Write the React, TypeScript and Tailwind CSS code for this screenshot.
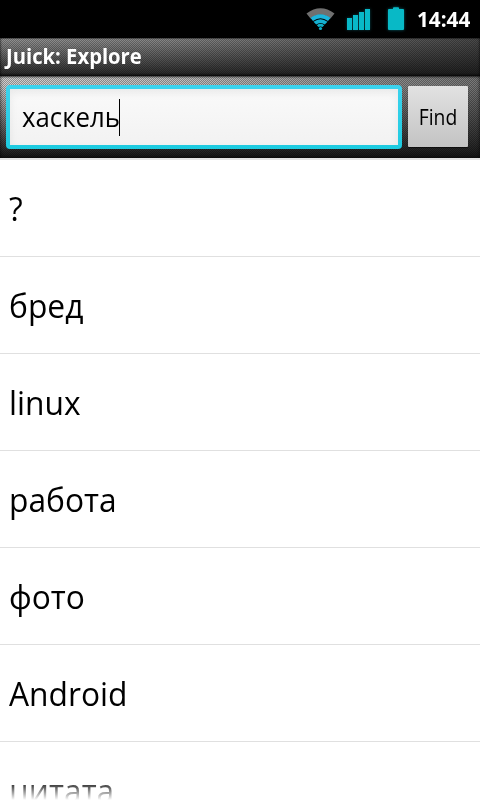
import React from "react";

const tags = ["?", "бред", "linux", "работа", "фото", "Android", "цитата"];

function WifiIcon() {
  return (
    <svg width="30" height="24" viewBox="0 0 30 24">
      <path d="M0.500 5.500 Q14.500 -5 28.500 5.500 L24.500 10.500 Q14.500 3 4.500 10.500 Z" fill="#707070" />
      <path d="M4.500 10 Q14.500 2.500 24.500 10 L22 13 Q14.500 7.500 7 13 Z" fill="#1bb4dc" />
      <path d="M7.500 13.800 Q14.500 8.500 21.500 13.800 L18.800 16.500 Q14.500 13.500 10.200 16.500 Z" fill="#14b1d2" />
      <path d="M10.800 17.200 Q14.500 14.500 18.200 17.200 L16.500 19 Q14.500 18 12.500 19 Z" fill="#0eafc8" />
      <circle cx="14.500" cy="20.500" r="1.600" fill="#0eafc8" />
    </svg>
  );
}

function SignalIcon() {
  return (
    <svg
      width="24"
      height="22"
      viewBox="0 0 24 22"
      fill="#08b9c8"
      className="overflow-visible drop-shadow-[0_0_1.5px_#06444c]"
    >
      <rect x="0" y="9" width="5" height="12" />
      <rect x="6" y="6" width="5" height="15" />
      <rect x="12" y="3" width="5" height="18" />
      <rect x="18" y="0" width="5" height="21" />
    </svg>
  );
}

function BatteryIcon() {
  return (
    <svg
      width="16"
      height="23"
      viewBox="0 0 16 23"
      fill="#08b9c6"
      className="overflow-visible drop-shadow-[0_0_1.5px_#066570]"
    >
      <path d="M1 2 H5 V1 Q5 0.300 6 0.300 H10 Q11 0.300 11 1 V2 H15 Q16 2 16 3 V22 Q16 23 15 23 H1 Q0 23 0 22 V3 Q0 2 1 2 Z" />
    </svg>
  );
}

export default function App() {
  return (
    <div className="relative flex h-[800px] w-[480px] flex-col overflow-hidden bg-white font-['Open_Sans','Noto_Sans',sans-serif] text-black">
      {/* STATUS BAR */}
      <div className="flex h-[38px] shrink-0 items-start bg-black pl-[306px] text-white">
        <div className="mt-[8px]"><WifiIcon /></div>
        <div className="mt-[9px] ml-[11px]"><SignalIcon /></div>
        <div className="mt-[7px] ml-[17px]"><BatteryIcon /></div>
        <span className="mt-[5px] ml-[13px] origin-left scale-x-[0.985] text-[21px] leading-[28px] font-bold">
          14:44
        </span>
      </div>

      {/* TITLE */}
      <div
        className="
          flex h-[38px] shrink-0 items-center pb-[2px] pl-[6px]
          bg-[repeating-conic-gradient(rgba(0,0,0,0.28)_0_25%,transparent_0_50%),linear-gradient(to_bottom,transparent,rgba(22,22,22,0.8)_92%,#0c0c0c),linear-gradient(to_right,#989898,#8c8c8c_35%,#4c4c4c)]
          bg-[length:2px_2px,100%_100%,100%_100%]
          shadow-[inset_2px_0_2px_-1px_rgba(0,0,0,0.4),inset_-2px_0_2px_-1px_rgba(0,0,0,0.4),inset_0_1px_1px_rgba(0,0,0,0.4)]
        "
      >
        <h1 className="origin-left scale-x-[0.963] text-[21px] leading-[28px] font-bold text-white">
          Juick: Explore
        </h1>
      </div>

      {/* SEARCH */}
      <div
        className="
          flex h-[84px] shrink-0 items-start border-b-2 border-[#e4e4e4] pt-[9px] pl-[6px]
          bg-[repeating-conic-gradient(rgba(0,0,0,0.32)_0_25%,transparent_0_50%),linear-gradient(to_bottom,transparent_10%,rgba(26,26,26,0.88)_88%,#141414),linear-gradient(to_right,#d0d0d0,#bcbcbc_40%,#787878)]
          bg-[length:2px_2px,100%_100%,100%_100%]
          shadow-[inset_2px_0_3px_-1px_rgba(0,0,0,0.4),inset_-2px_0_3px_-1px_rgba(0,0,0,0.4),inset_0_2px_2px_-1px_rgba(0,0,0,0.6)]
        "
      >
        <div
          className="
            flex h-[64px] w-[396px] items-center rounded-[4px] pl-[16px]
            bg-linear-to-b from-[#3bd3ee] to-[#1ccbe0]
            relative
          "
        >
          <div className="absolute inset-[4px] bg-linear-to-b from-[#fafafa] to-[#f2f2f2] shadow-[inset_0_4px_8px_rgba(0,0,0,0.07)]" />
          <div className="relative flex w-[97px] items-center">
            <span className="origin-left scale-x-[0.955] text-[27px] whitespace-nowrap">хаскель</span>
          </div>
          <span className="relative h-[37px] w-px bg-black" />
        </div>
        <button
          className="
            mt-px ml-[6px] h-[61px] w-[60px] rounded-[1px] pt-[2px]
            bg-linear-to-b from-[#e2e2e2] to-[#c3c3c3]
            shadow-[0_1px_1px_rgba(0,0,0,0.6)]
          "
        >
          <span className="block scale-x-[0.92] text-[21px]">Find</span>
        </button>
      </div>

      {/* TAGS */}
      <ul className="shrink-0">
        {tags.map((tag) => (
          <li
            key={tag}
            className="flex h-[97px] items-center border-b border-[#e0e0e0] pt-[2px] pl-[9px] text-[33px]"
          >
            <span className="origin-left scale-x-[0.962]">{tag}</span>
          </li>
        ))}
      </ul>

      {/* BOTTOM FADE */}
      <div className="absolute inset-x-0 bottom-0 h-[20px] bg-linear-to-t from-white to-transparent" />
    </div>
  );
}
